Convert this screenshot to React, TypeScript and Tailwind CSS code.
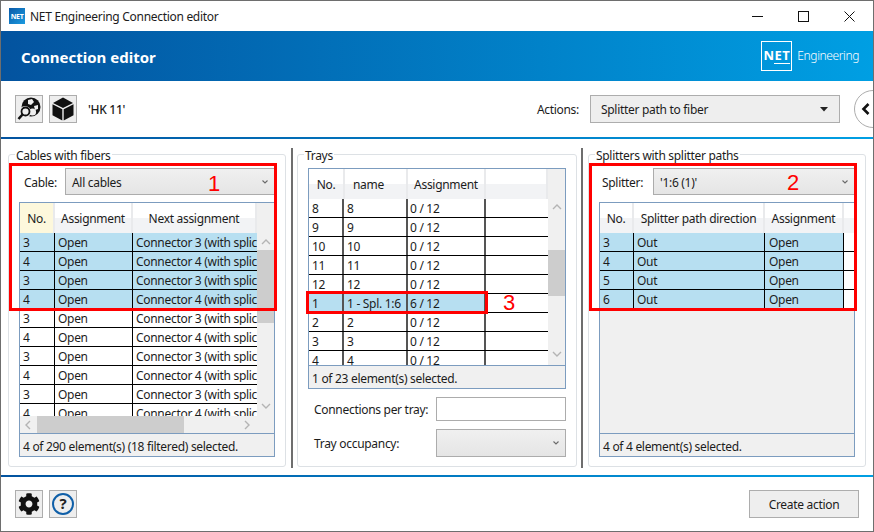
import { FaCog } from 'react-icons/fa';

const LEFT = [
  ['3', 'Open', 'Connector 3 (with splice)', true],
  ['4', 'Open', 'Connector 4 (with splice)', true],
  ['3', 'Open', 'Connector 3 (with splice)', true],
  ['4', 'Open', 'Connector 4 (with splice)', true],
  ['3', 'Open', 'Connector 3 (with splice)', false],
  ['4', 'Open', 'Connector 4 (with splice)', false],
  ['3', 'Open', 'Connector 3 (with splice)', false],
  ['4', 'Open', 'Connector 4 (with splice)', false],
  ['3', 'Open', 'Connector 3 (with splice)', false],
  ['4', 'Open', 'Connector 4 (with splice)', false],
] as const;

const TRAYS = [
  ['8', '8', '0 / 12', false],
  ['9', '9', '0 / 12', false],
  ['10', '10', '0 / 12', false],
  ['11', '11', '0 / 12', false],
  ['12', '12', '0 / 12', false],
  ['1', '1 - Spl. 1:6', '6 / 12', true],
  ['2', '2', '0 / 12', false],
  ['3', '3', '0 / 12', false],
  ['4', '4', '0 / 12', false],
] as const;

const SPLITTERS = ['3', '4', '5', '6'];

function Chevron({ dir, className }: { dir: 'up' | 'down' | 'left' | 'right'; className?: string }) {
  const d = {
    up: 'M1 6 L5 2 L9 6',
    down: 'M1 2 L5 6 L9 2',
    left: 'M6 1 L2 5 L6 9',
    right: 'M2 1 L6 5 L2 9',
  }[dir];
  return (
    <svg width="10" height="10" viewBox="0 0 10 10" className={className} fill="none" stroke="#b4b4b4" strokeWidth="1.4">
      <path d={d} />
    </svg>
  );
}

function Combo({ text, className }: { text?: string; className: string }) {
  return (
    <div className={`flex items-center justify-between border border-[#acacac] bg-[linear-gradient(#f0f0f0,#e5e5e5)] pl-[6px] pr-[6px] ${className}`}>
      <span className="pt-[2px]">{text}</span>
      <svg width="6" height="4" viewBox="0 0 6 4" fill="none" stroke="#6a6a6a" strokeWidth="1.1">
        <path d="M0.5 0.5 L3 3 L5.5 0.5" />
      </svg>
    </div>
  );
}

function HeadCell({ label, className }: { label?: string; className: string }) {
  return (
    <div className={`flex h-full shrink-0 items-center border-r-2 border-[#e9eaec] pt-[2px] ${className}`}>
      {label}
    </div>
  );
}

function Panel({ title, width, children }: { title: string; width: string; children: React.ReactNode }) {
  return (
    <fieldset className={`h-[321px] shrink-0 rounded-[3px] border border-[#dde1e5] ${width}`}>
      <legend className="ml-[6px] h-[16px] px-[1px] pt-[2px] leading-[16px]">{title}</legend>
      {children}
    </fieldset>
  );
}

function Status({ text }: { text: string }) {
  return (
    <div className="flex h-[23px] shrink-0 items-center border-t border-[#7c9cbf] bg-[#f0f0f0] pl-[3px] pt-[3px]">{text}</div>
  );
}

function ToolButton({ children }: { children: React.ReactNode }) {
  return (
    <button className="flex h-[28px] w-[28px] items-center justify-center border border-[#adadad] bg-[#eeeeee]">
      {children}
    </button>
  );
}

function WindowIcon() {
  return (
    <div className="flex h-[16px] w-[16px] items-center justify-center bg-[linear-gradient(135deg,#0a5aa8,#1b9be0)] text-[7px] font-bold leading-none text-white">
      NET
    </div>
  );
}

function GlobeSearch() {
  return (
    <svg width="24" height="24" viewBox="0 0 24 24">
      <circle cx="14" cy="10" r="9.5" fill="#111" />
      <path d="M11 3 L15 2 L17 5 L14 8 L11 7 Z" fill="#eee" />
      <path d="M17 9 L21 8 L21 12 L18 13 Z" fill="#eee" />
      <circle cx="15.5" cy="15" r="3.6" fill="#eee" />
      <circle cx="8" cy="15" r="6" fill="#eee" />
      <circle cx="8.5" cy="14.5" r="4" fill="#eee" stroke="#111" strokeWidth="1.8" />
      <path d="M5.5 17.5 L1.5 22" stroke="#111" strokeWidth="2.6" />
    </svg>
  );
}

function Cube() {
  return (
    <svg width="22" height="24" viewBox="0 0 22 24" fill="#111">
      <path d="M11 0.5 L21 6 L11 11 L1 6 Z" />
      <path d="M0.5 7.3 L10.3 12.2 L10.3 23.5 L0.5 18.2 Z" />
      <path d="M21.5 7.3 L11.7 12.2 L11.7 23.5 L21.5 18.2 Z" />
    </svg>
  );
}

export default function App() {
  return (
    <div className="relative flex h-[532px] w-[874px] flex-col overflow-hidden border border-[#6e6e6e] bg-white font-['Noto_Sans',sans-serif] text-[12px] leading-none tracking-[-0.3px] text-[#1c1c1c]">
      {/* title bar */}
      <div className="flex h-[30px] shrink-0 items-center pl-[8px]">
        <WindowIcon />
        <span className="ml-[5px] pt-[2px]">NET Engineering Connection editor</span>
        <div className="ml-auto flex items-center pr-[18px]">
          <svg width="11" height="11" viewBox="0 0 11 11" stroke="#111" fill="none">
            <path d="M0 5.5 H11" />
          </svg>
          <svg width="11" height="11" viewBox="0 0 11 11" stroke="#111" fill="none" className="ml-[35px]">
            <rect x="0.5" y="0.5" width="10" height="10" />
          </svg>
          <svg width="11" height="11" viewBox="0 0 11 11" stroke="#111" fill="none" className="ml-[35px]">
            <path d="M0.5 0.5 L10.5 10.5 M10.5 0.5 L0.5 10.5" />
          </svg>
        </div>
      </div>

      {/* header */}
      <div className="flex h-[50px] shrink-0 items-center justify-between bg-[linear-gradient(90deg,#03539f,#009fe3)] pl-[20px] pr-[14px] text-white">
        <span className="pt-[2px] text-[15px] font-bold tracking-normal">Connection editor</span>
        <div className="flex items-center">
          <div className="flex h-[30px] w-[31px] flex-col items-center justify-center border border-white text-[13px] font-bold leading-none tracking-[0.4px]">
            <span>NET</span>
            <span className="ml-[11px] mt-[1px] h-px w-[16px] bg-white" />
          </div>
          <span className="ml-[5px] text-[12px] font-light tracking-[-0.4px]">Engineering</span>
        </div>
      </div>

      {/* toolbar */}
      <div className="flex h-[56px] shrink-0 items-center pl-[14px]">
        <ToolButton>
          <GlobeSearch />
        </ToolButton>
        <div className="ml-[6px]">
          <ToolButton>
            <Cube />
          </ToolButton>
        </div>
        <span className="ml-[11px] pt-[2px] font-medium">'HK 11'</span>
        <span className="ml-auto pt-[2px]">Actions:</span>
        <div className="ml-[11px] flex h-[28px] w-[250px] items-center justify-between border border-[#adadad] bg-[#eeeeee] pl-[10px] pr-[4px]">
          <span className="pt-[2px]">Splitter path to fiber</span>
          <svg width="8" height="5" viewBox="0 0 8 5" className="mr-[7px]">
            <path d="M0 0 H8 L4 4.5 Z" fill="#222" />
          </svg>
        </div>
        <div className="ml-[14px] mr-[-19px] flex h-[38px] w-[38px] shrink-0 items-center border border-[#adadad] bg-white pl-[6px] [border-radius:50%]">
          <svg width="10" height="12" viewBox="0 0 10 12" fill="none" stroke="#111" strokeWidth="2.6">
            <path d="M7.5 1 L2.5 6 L7.5 11" />
          </svg>
        </div>
      </div>

      <div className="h-[2px] shrink-0 bg-[linear-gradient(90deg,#03539f,#009fe3)]" />

      {/* main area */}
      <div className="flex h-[336px] shrink-0 pl-[7px] pt-[7px]">
        <Panel title="Cables with fibers" width="w-[278px]">
          <div className="pl-[10px] pt-[6px]">
            <div className="flex h-[27px] w-[256px] items-center pl-[5px]">
              <span className="w-[41px] pt-[2px]">Cable:</span>
              <Combo text="All cables" className="h-[27px] w-[210px]" />
            </div>
            <div className="mt-[7px] flex h-[255px] w-[256px] flex-col border border-[#7c9cbf]">
              <div className="flex h-[30px] shrink-0 bg-[linear-gradient(#fff_50%,#f2f3f5_50%)]">
                <HeadCell label="No." className="w-[35px] justify-center bg-[#fdf8dc]" />
                <HeadCell label="Assignment" className="w-[78px] justify-center" />
                <HeadCell label="Next assignment" className="w-[124px] justify-center border-r-0" />
                <div className="flex-1 bg-[#f0f0f0]" />
              </div>
              <div className="flex h-[183px] shrink-0">
                <div className="w-[237px] overflow-hidden">
                  {LEFT.map(([no, a, next, sel], i) => (
                    <div key={i} className={`flex h-[19px] items-center border-b border-black ${sel ? 'bg-[#b7dff1]' : ''}`}>
                      <div className="flex h-full w-[35px] shrink-0 items-center border-r border-black pl-[3px] pt-[2px]">{no}</div>
                      <div className="flex h-full w-[78px] shrink-0 items-center border-r border-black pl-[3px] pt-[2px]">{a}</div>
                      <div className="w-[124px] overflow-hidden whitespace-nowrap pl-[3px] pt-[2px]">{next}</div>
                    </div>
                  ))}
                </div>
                <div className="flex flex-1 flex-col items-center bg-[#f0f0f0]">
                  <Chevron dir="up" className="mt-[5px] shrink-0" />
                  <div className="mt-[2px] h-[73px] w-full shrink-0 bg-[#cdcdcd]" />
                  <Chevron dir="down" className="mt-[79px] shrink-0" />
                </div>
              </div>
              <div className="flex h-[17px] shrink-0 items-center bg-[#f0f0f0]">
                <Chevron dir="left" className="ml-[4px] shrink-0" />
                <div className="ml-[3px] h-full w-[147px] shrink-0 bg-[#cdcdcd]" />
                <Chevron dir="right" className="ml-[59px] shrink-0" />
              </div>
              <Status text="4 of 290 element(s) (18 filtered) selected." />
            </div>
          </div>
        </Panel>

        <div className="ml-[5px] mt-[2px] h-[320px] w-[2px] shrink-0 bg-[#6e6e6e]" />

        <div className="ml-[4px]">
          <Panel title="Trays" width="w-[280px]">
            <div className="pl-[10px] pt-[6px]">
              <div className="flex h-[221px] w-[258px] flex-col border border-[#7c9cbf]">
                <div className="flex h-[30px] shrink-0 bg-[linear-gradient(#fff_50%,#f2f3f5_50%)]">
                  <HeadCell label="No." className="w-[36px] justify-center" />
                  <HeadCell label="name" className="w-[63px] pl-[8px]" />
                  <HeadCell label="Assignment" className="w-[78px] justify-center" />
                  <HeadCell className="w-[62px] border-r-0" />
                  <div className="flex-1 bg-[#f0f0f0]" />
                </div>
                <div className="flex h-[166px] shrink-0">
                  <div className="w-[239px] overflow-hidden">
                    {TRAYS.map(([no, name, a, sel], i) => (
                      <div key={i} className={`flex h-[19px] items-center border-b border-black ${sel ? '[&>div]:bg-[#b7dff1]' : ''}`}>
                        <div className="flex h-full w-[35px] shrink-0 items-center border-r-2 border-[#555] pl-[3px] pt-[2px]">{no}</div>
                        <div className="flex h-full w-[64px] shrink-0 items-center whitespace-nowrap border-r-2 border-[#555] pl-[3px] pt-[2px]">{name}</div>
                        <div className="flex h-full w-[78px] shrink-0 items-center border-r-2 border-[#555] pl-[2px] pt-[2px]">{a}</div>
                      </div>
                    ))}
                  </div>
                  <div className="flex flex-1 flex-col items-center bg-[#f0f0f0]">
                    <Chevron dir="up" className="mt-[4px] shrink-0" />
                    <div className="mt-[37px] h-[46px] w-full shrink-0 bg-[#cdcdcd]" />
                    <Chevron dir="down" className="mt-[54px] shrink-0" />
                  </div>
                </div>
                <Status text="1 of 23 element(s) selected." />
              </div>
              <div className="mt-[8px] flex h-[24px] w-[258px] items-center justify-between pl-[6px]">
                <span className="pt-[2px]">Connections per tray:</span>
                <div className="h-[24px] w-[130px] border border-[#acacac] bg-white" />
              </div>
              <div className="mt-[8px] flex h-[28px] w-[258px] items-center justify-between pl-[6px]">
                <span className="pt-[2px]">Tray occupancy:</span>
                <Combo className="h-[28px] w-[130px]" />
              </div>
            </div>
          </Panel>
        </div>

        <div className="ml-[4px] mt-[2px] h-[320px] w-[2px] shrink-0 bg-[#6e6e6e]" />

        <div className="ml-[5px]">
          <Panel title="Splitters with splitter paths" width="w-[278px]">
            <div className="pl-[10px] pt-[6px]">
              <div className="flex h-[27px] w-[256px] items-center pl-[3px]">
                <span className="w-[51px] pt-[2px]">Splitter:</span>
                <Combo text="'1:6 (1)'" className="h-[27px] w-[202px]" />
              </div>
              <div className="mt-[7px] flex h-[255px] w-[256px] flex-col border border-[#7c9cbf]">
                <div className="flex h-[30px] shrink-0 bg-[linear-gradient(#fff_50%,#f2f3f5_50%)]">
                  <HeadCell label="No." className="w-[34px] justify-center" />
                  <HeadCell label="Splitter path direction" className="w-[131px] justify-center" />
                  <HeadCell label="Assignment" className="w-[79px] justify-center" />
                </div>
                <div className="flex-1 bg-[#f0f0f0]">
                  {SPLITTERS.map((no) => (
                    <div key={no} className="flex h-[19px] items-center border-b border-black bg-white">
                      <div className="flex h-full w-[34px] shrink-0 items-center border-r border-black bg-[#b7dff1] pl-[3px] pt-[2px]">{no}</div>
                      <div className="flex h-full w-[131px] shrink-0 items-center border-r border-black bg-[#b7dff1] pl-[3px] pt-[2px]">Out</div>
                      <div className="flex h-full w-[79px] shrink-0 items-center border-r border-black bg-[#b7dff1] pl-[4px] pt-[2px]">Open</div>
                    </div>
                  ))}
                </div>
                <Status text="4 of 4 element(s) selected." />
              </div>
            </div>
          </Panel>
        </div>
      </div>

      <div className="h-[2px] shrink-0 bg-[linear-gradient(90deg,#03539f,#009fe3)]" />

      {/* footer */}
      <div className="flex flex-1 items-center pb-[1px] pl-[14px] pr-[14px]">
        <ToolButton>
          <FaCog className="h-[22px] w-[22px] text-[#111]" />
        </ToolButton>
        <div className="ml-[6px]">
          <ToolButton>
            <div className="flex h-[22px] w-[22px] items-center justify-center rounded-full border-2 border-[#0f5fa8] text-[15px] font-bold text-[#222]">?</div>
          </ToolButton>
        </div>
        <button className="ml-auto h-[28px] w-[110px] border border-[#adadad] bg-[#eeeeee] pt-[2px]">Create action</button>
      </div>

      {/* red annotations */}
      <div className="absolute left-[8px] top-[162px] h-[148px] w-[268px] border-[3px] border-[#ff0000]" />
      <div className="absolute left-[588px] top-[162px] h-[148px] w-[268px] border-[3px] border-[#ff0000]" />
      <div className="absolute left-[305px] top-[290px] h-[23px] w-[182px] border-[3px] border-[#ff0000]" />
      <span className="absolute left-[207px] top-[171px] font-['Liberation_Sans',sans-serif] text-[22px] leading-[24px] tracking-normal text-[#ff0000]">1</span>
      <span className="absolute left-[786px] top-[170px] font-['Liberation_Sans',sans-serif] text-[22px] leading-[24px] tracking-normal text-[#ff0000]">2</span>
      <span className="absolute left-[502px] top-[290px] font-['Liberation_Sans',sans-serif] text-[22px] leading-[24px] tracking-normal text-[#ff0000]">3</span>
    </div>
  );
}
